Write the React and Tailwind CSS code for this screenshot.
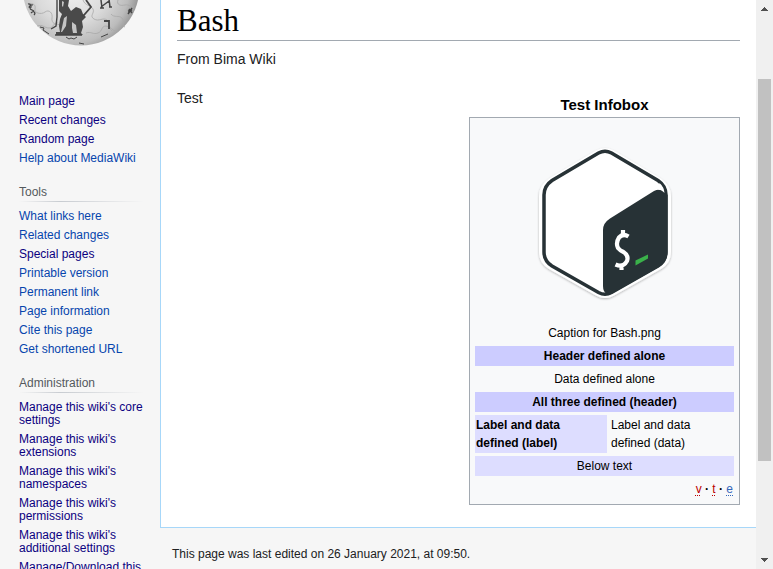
import React from "react";

const mainLinks = [
  ["Main page", true],
  ["Recent changes", true],
  ["Random page", true],
  ["Help about MediaWiki", false],
];
const toolLinks = [
  ["What links here", false],
  ["Related changes", false],
  ["Special pages", true],
  ["Printable version", false],
  ["Permanent link", false],
  ["Page information", false],
  ["Cite this page", false],
  ["Get shortened URL", false],
];
const adminLinks = [
  ["Manage this wiki's core settings", true],
  ["Manage this wiki's extensions", true],
  ["Manage this wiki's namespaces", true],
  ["Manage this wiki's permissions", true],
  ["Manage this wiki's additional settings", true],
  ["Manage/Download this wiki's backups", true],
];

function Portal({ title, links }) {
  return (
    <nav aria-label={title || "Navigation"} className="pr-4 pl-[19px]">
      {title && (
        <>
          <h3 className="pb-px text-xs leading-4 text-[#54595d]">{title}</h3>
          <div className="mb-2 h-px bg-linear-to-r from-transparent via-[#c8ccd1] via-33% to-transparent" />
        </>
      )}
      <ul className="flex flex-col gap-[6px] text-xs leading-[13px]">
        {links.map(([text, visited]) => (
          <li key={text}>
            <a href="#" className={visited ? "text-[#0b0080]" : "text-[#0645ad]"}>
              {text}
            </a>
          </li>
        ))}
      </ul>
    </nav>
  );
}

function Globe() {
  return (
    <svg viewBox="0 0 120 50" className="ml-5 block h-[50px] w-[120px] shrink-0" role="img" aria-label="Wiki globe">
      <defs>
        <radialGradient id="globe" gradientUnits="userSpaceOnUse" cx="52" cy="-14" r="68">
          <stop offset="0" stopColor="#f4f4f4" />
          <stop offset="0.55" stopColor="#dadada" />
          <stop offset="0.85" stopColor="#bcbcbc" />
          <stop offset="1" stopColor="#969696" />
        </radialGradient>
      </defs>
      <circle cx="61" cy="-13" r="58.5" fill="url(#globe)" />
      <g fill="none" stroke="#a8a8a8" strokeWidth="0.8">
        <path d="M8 5c5-3 8 0 7 4s6 6 10 3 8 1 7 6 4 8 9 6" />
        <path d="M17 26c6-2 7 2 12 2s4-6 9-5" />
        <path d="M63 0c2 6 8 5 10 9s-4 7 1 10 9-2 13 1 1 8 5 11" />
        <path d="M91 14c3 4 8 1 11 4s-1 8 3 9" />
        <path d="M66 33c5-2 7 2 12 0s3-7 8-7 6 5 10 5" />
        <path d="M98 0c-2 5 3 6 7 5s6 3 9 1" />
      </g>
      <path
        d="M39 0h10l-1 6 3 5 5-4 5 2 2 5 3 3-4 4 1 6-2 6 2 2H36v-3h4l-1-6 1-7 2-5-3-3z"
        fill="#4a4a4a"
      />
      <g fill="#c4c4c4">
        <path d="M44 18l3-2-1 10-4 6h-1zM52 22l4 3 1 8h-4l-1-5zM42 1l2 1-1 5-1-1z" />
      </g>
      <g stroke="#444" fill="none">
        <path d="M37 0v17l-1 9-5 3M35 35h27" strokeWidth="1.4" />
        <path d="M66 0l5 7-7 8-2 1" strokeWidth="1.8" />
        <path d="M81 0l1 8m7-9l1 8m-9 0l8-6M80 8h4m5-1h3" strokeWidth="1.5" />
        <path d="M84 21h5v8" strokeWidth="1.8" />
        <path d="M8 4c3-1 4 4 2 4s0-4 3-3m-2 8c3-3 5 0 3 2m-4-6l4 2" strokeWidth="1.2" />
        <path d="M20 27l4 1-1 2 6 4m17 3l3 2 2-1 3 1 3-2m24 0l7-3M59 43l5 1" strokeWidth="1" />
        <path d="M109 9l3 4m-4 1l4-6m-4 3l4-1" strokeWidth="1.5" />
      </g>
    </svg>
  );
}

function BashLogo() {
  return (
    <svg viewBox="0 0 170 180" className="block h-[180px] w-[170px]" role="img" aria-label="Bash logo">
      <defs>
        <filter id="shade" x="-10%" y="-10%" width="120%" height="120%">
          <feDropShadow dx="0" dy="1" stdDeviation="1.2" floodColor="#000" floodOpacity="0.28" />
        </filter>
      </defs>
      <path
        d="M76 14.500Q85 9.500 94 14.500L140 42Q151 49 151 60V116Q151 127 141 133L94 159.500Q85 164.500 76 159.500L29 133Q19 127 19 116V60Q19 49 30 42Z"
        fill="#fff"
        filter="url(#shade)"
      />
      <path
        d="M78.500 17Q85 13.500 91.500 17L138 44.500Q146 50 146 59V116Q146 125 138 130L91.500 156.500Q85 160 78.500 156.500L32 130Q24 125 24 116V59Q24 50 32 44.500Z"
        fill="#fff"
        stroke="#273236"
        strokeWidth="3.500"
      />
      <path
        d="M134 55Q140 52 143.500 56L147.500 59V116Q147.500 126 139 131L93 157Q89 159.500 87 158Q83 156 83 150V94Q83 87 90 82.500Z"
        fill="#273236"
      />
      <path d="M139.500 47Q144 51 144.500 57Q142 53 138 53.500" fill="#fff" />
      <path
        d="M108.500 100.500Q103 97 99 101.500Q95.500 107 98 112Q100 114.500 103.500 116Q109 119.500 107 125Q103 132 95.500 128.500M103 94V101M101.500 128V134"
        fill="none"
        stroke="#fff"
        strokeWidth="4.200"
      />
      <path d="M115.500 124.500L128 118.500V122.500L115.500 129.500Z" fill="#3ab14a" />
    </svg>
  );
}

function Infobox() {
  return (
    <table className="w-[271px] border-separate border-spacing-[3px] border border-[#a2a9b1] bg-[#f8f9fa] p-0.5 text-xs leading-[18px] text-black">
      <caption className="pb-0.5 text-[15px] leading-5 font-bold">Test Infobox</caption>
      <tbody>
        <tr>
          <td colSpan={2} className="pt-[13px] pb-px text-center">
            <div className="flex justify-center pb-2">
              <BashLogo />
            </div>
            <div>Caption for Bash.png</div>
          </td>
        </tr>
        <tr>
          <th colSpan={2} className="bg-[#ccccff] p-px">Header defined alone</th>
        </tr>
        <tr>
          <td colSpan={2} className="p-px text-center">Data defined alone</td>
        </tr>
        <tr>
          <th colSpan={2} className="bg-[#ccccff] p-px">All three defined (header)</th>
        </tr>
        <tr>
          <th scope="row" className="w-[132px] bg-[#ddddff] p-px text-left">Label and data defined (label)</th>
          <td className="p-px">Label and data defined (data)</td>
        </tr>
        <tr>
          <td colSpan={2} className="bg-[#ddddff] p-px text-center">Below text</td>
        </tr>
        <tr>
          <td colSpan={2} className="p-px text-right">
            <a href="#" className="text-[#ba0000] underline decoration-dotted underline-offset-2">v</a>
            <b> · </b>
            <a href="#" className="text-[#ba0000] underline decoration-dotted underline-offset-2">t</a>
            <b> · </b>
            <a href="#" className="text-[#3366bb] underline decoration-dotted underline-offset-2">e</a>
          </td>
        </tr>
      </tbody>
    </table>
  );
}

function Scrollbar() {
  return (
    <div aria-hidden="true" className="flex w-[17px] shrink-0 flex-col items-center bg-[#f0f0f0]">
      <svg viewBox="0 0 17 17" className="h-[17px] w-[17px] shrink-0" shapeRendering="crispEdges">
        <path d="M5 11L8.500 7L12 11Z" fill="#505050" />
      </svg>
      <div className="h-[62px]" />
      <div className="h-[382px] w-[13px] bg-[#c1c1c1]" />
      <div className="grow" />
      <svg viewBox="0 0 17 17" className="h-[17px] w-[17px] shrink-0" shapeRendering="crispEdges">
        <path d="M5 6L8.500 10L12 6Z" fill="#505050" />
      </svg>
    </div>
  );
}

export default function App() {
  return (
    <div className="flex h-screen overflow-hidden bg-[#f6f6f6] font-['Liberation_Sans',Arial,sans-serif] text-[#202122]">
      <aside className="flex w-40 shrink-0 flex-col">
        <Globe />
        <div className="flex flex-col gap-[19px] pt-[45px]">
          <Portal links={mainLinks} />
          <Portal title="Tools" links={toolLinks} />
          <Portal title="Administration" links={adminLinks} />
        </div>
      </aside>
      <div className="min-w-0 grow">
        <main className="border-b border-l border-[#a7d7f9] bg-white px-4 pb-[22px]">
          <h1 className="border-b border-[#a2a9b1] pt-0.5 font-['Liberation_Serif',serif] text-[31px] leading-[38px] text-black">
            Bash
          </h1>
          <p className="pt-[7px] text-sm leading-[22px]">From Bima Wiki</p>
          <div className="flex items-start justify-between pt-[17px]">
            <p className="text-sm leading-[22px]">Test</p>
            <div className="pt-2">
              <Infobox />
            </div>
          </div>
        </main>
        <footer className="px-3 pt-[17px] text-xs leading-[18px]">
          This page was last edited on 26 January 2021, at 09:50.
        </footer>
      </div>
      <Scrollbar />
    </div>
  );
}
